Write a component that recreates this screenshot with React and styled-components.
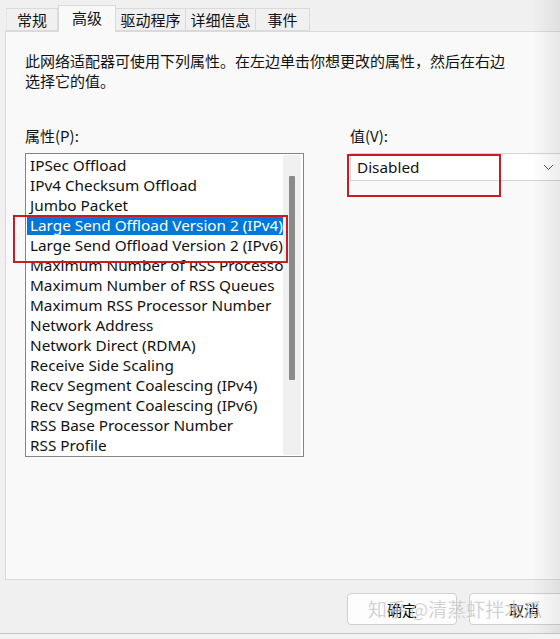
import styled, { createGlobalStyle } from "styled-components";

const GlobalStyle = createGlobalStyle`
  html, body {
    margin: 0;
    padding: 0;
    background: #f3f3f3;
  }
  body {
    font-family: "Noto Sans", "Noto Sans CJK SC", sans-serif;
    font-size: 15px;
    color: #000;
  }
`;

const properties = [
  "IPSec Offload",
  "IPv4 Checksum Offload",
  "Jumbo Packet",
  "Large Send Offload Version 2 (IPv4)",
  "Large Send Offload Version 2 (IPv6)",
  "Maximum Number of RSS Processors",
  "Maximum Number of RSS Queues",
  "Maximum RSS Processor Number",
  "Network Address",
  "Network Direct (RDMA)",
  "Receive Side Scaling",
  "Recv Segment Coalescing (IPv4)",
  "Recv Segment Coalescing (IPv6)",
  "RSS Base Processor Number",
  "RSS Profile",
];

// tab label + width in px
const tabs = [
  ["常规", 52],
  ["高级", 58],
  ["驱动程序", 70],
  ["详细信息", 70],
  ["事件", 54],
];

function App() {
  return (
    <Dialog>
      <GlobalStyle />
      <TabStrip>
        {tabs.map(([t, w]) => (
          <Tab key={t} $width={w} $active={t === "高级"}>
            {t}
          </Tab>
        ))}
      </TabStrip>

      <Panel>
        <Description>
          此网络适配器可使用下列属性。在左边单击你想更改的属性，然后在右边
          <br />
          选择它的值。
        </Description>

        <Columns>
          <LeftColumn>
            <FieldLabel>属性(P):</FieldLabel>
            <ListBox>
              <Items>
                {properties.map((p, i) => (
                  <Item key={p} $selected={i === 3}>
                    {p}
                  </Item>
                ))}
              </Items>
              <ScrollTrack>
                <ScrollThumb />
              </ScrollTrack>
              <Highlight $left={-13} $top={61} $width={275} $height={48} />
            </ListBox>
          </LeftColumn>

          <RightColumn>
            <FieldLabel>值(V):</FieldLabel>
            <Select>
              <span>Disabled</span>
              <svg width="11" height="7" viewBox="0 0 11 7">
                <path d="M1 1 L5.5 5.5 L10 1" fill="none" stroke="#555" strokeWidth="1" />
              </svg>
              <Highlight $left={-4} $top={0} $width={154} $height={43} />
            </Select>
          </RightColumn>
        </Columns>
      </Panel>

      <Footer>
        <Button>确定</Button>
        <Button>取消</Button>
        <Watermark>知乎 @清蒸虾拌木瓜</Watermark>
      </Footer>
      <EdgeShade />
    </Dialog>
  );
}

const Dialog = styled.div`
  position: relative;
  width: 560px;
  height: 633px;
  background: #f0f0f0;
  border-bottom: 1px solid #c4c4c4;
  box-shadow: 0 2px 2px rgba(0, 0, 0, 0.06);
  overflow: hidden;
  font-family: "Noto Sans", "Noto Sans CJK SC", sans-serif;
`;

const TabStrip = styled.div`
  display: flex;
  align-items: flex-end;
  height: 31px;
  padding-left: 6px;
  box-sizing: border-box;
`;

const Tab = styled.div`
  box-sizing: border-box;
  width: ${(p) => p.$width}px;
  height: ${(p) => (p.$active ? "27px" : "23px")};
  margin-bottom: ${(p) => (p.$active ? "-1px" : "0")};
  padding-bottom: ${(p) => (p.$active ? "3px" : "0")};
  display: flex;
  align-items: center;
  justify-content: center;
  background: ${(p) => (p.$active ? "#f9f9f9" : "#f0f0f0")};
  border: 1px solid #dadada;
  border-bottom: ${(p) => (p.$active ? "none" : "1px solid #dadada")};
  border-left: ${(p) => (p.$active ? "1px solid #dadada" : "none")};
  font-family: "Noto Sans CJK SC", sans-serif;
  font-size: 15px;
  color: #111;
  position: relative;
  z-index: ${(p) => (p.$active ? 2 : 1)};

  &:first-child {
    border-left: 1px solid #e6e6e6;
  }
`;

const Panel = styled.div`
  margin-left: 5px;
  height: 549px;
  box-sizing: border-box;
  background: #f9f9f9;
  border: 1px solid #dadada;
  border-right: none;
  padding: 19px 0 0 19px;
`;

const Description = styled.p`
  margin: 0;
  font-family: "Noto Sans CJK SC", sans-serif;
  font-size: 15px;
  line-height: 20px;
  color: #111;
`;

const Columns = styled.div`
  display: flex;
  gap: 46px;
  margin-top: 35px;
`;

const LeftColumn = styled.div`
  width: 279px;
`;

const RightColumn = styled.div`
  flex: 1;
`;

const FieldLabel = styled.div`
  font-family: "Noto Sans CJK SC", sans-serif;
  font-size: 15px;
  line-height: 20px;
  margin-bottom: 7px;
  color: #111;
`;

const ListBox = styled.div`
  position: relative;
  display: flex;
  height: 304px;
  box-sizing: border-box;
  background: #fff;
  border: 1px solid #848484;
`;

const Items = styled.div`
  flex: 1;
  min-width: 0;
  padding: 1px 0 0 1px;
  overflow: hidden;
`;

const Item = styled.div`
  height: 20px;
  line-height: 20px;
  padding-left: 3px;
  white-space: nowrap;
  overflow: hidden;
  font-size: 15.3px;
  color: ${(p) => (p.$selected ? "#fff" : "#111")};
  background: ${(p) => (p.$selected ? "#0078d7" : "transparent")};
`;

const ScrollTrack = styled.div`
  width: 18px;
  flex: none;
  margin: 1px 2px 1px 0;
  background: #f0f0f0;
  display: flex;
  justify-content: center;
  padding-top: 21px;
  box-sizing: border-box;
`;

const ScrollThumb = styled.div`
  width: 6px;
  height: 204px;
  background: #8a8a8a;
  border-radius: 1px;
`;

const Highlight = styled.div`
  position: absolute;
  left: ${(p) => p.$left}px;
  top: ${(p) => p.$top}px;
  width: ${(p) => p.$width}px;
  height: ${(p) => p.$height}px;
  box-sizing: border-box;
  border: 2px solid #cc1a24;
  pointer-events: none;
`;

const Select = styled.div`
  position: relative;
  height: 28px;
  box-sizing: border-box;
  display: flex;
  align-items: center;
  justify-content: space-between;
  padding: 0 6px 0 6px;
  background: #fff;
  border: 1px solid #d4d4d4;
  border-right: none;
  font-size: 15.3px;
  color: #111;
`;

const Footer = styled.div`
  position: relative;
  display: flex;
  gap: 12px;
  padding: 13px 0 0 347px;
`;

const Button = styled.button`
  flex: none;
  width: 110px;
  height: 32px;
  padding: 0;
  border: 1px solid #d0d0d0;
  border-radius: 4px;
  background: #fdfdfd;
  font-family: "Noto Sans CJK SC", sans-serif;
  font-size: 15px;
  color: #000;
`;

const Watermark = styled.div`
  position: absolute;
  left: 368px;
  top: 15px;
  font-family: "Noto Sans CJK SC", sans-serif;
  font-size: 19px;
  color: rgba(185, 185, 185, 0.75);
  -webkit-text-stroke: 0.3px rgba(255, 255, 255, 0.6);
  pointer-events: none;
  white-space: nowrap;
`;

const EdgeShade = styled.div`
  position: absolute;
  top: 0;
  right: 0;
  bottom: 0;
  width: 28px;
  background: linear-gradient(to right, rgba(0, 0, 0, 0), rgba(0, 0, 0, 0.07));
  pointer-events: none;
`;

export default App;
